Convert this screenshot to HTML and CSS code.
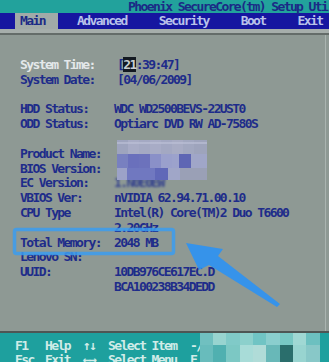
FILE: index.html
```html
<!DOCTYPE html>
<html>
<head>
<meta charset="utf-8">
<link rel="stylesheet" href="styles.css">
</head>
<body>
<div class="screen">
  <div class="title">Phoenix SecureCore(tm) Setup Uti</div>
  <nav class="tabs">
    <span class="tab active">Main</span>
    <span class="tab">Advanced</span>
    <span class="tab">Security</span>
    <span class="tab">Boot</span>
    <span class="tab">Exit</span>
  </nav>
  <div class="rule"></div>
  <main class="panel">
    <div class="row hl"><span>System Time:</span><span class="val">[<span class="cursor">21</span>:39:47]</span></div>
    <div class="row"><span>System Date:</span><span class="val">[04/06/2009]</span></div>
    <div class="row"></div>
    <div class="row"><span>HDD Status:</span><span class="val v2">WDC WD2500BEVS-22UST0</span></div>
    <div class="row"><span>ODD Status:</span><span class="val v2">Optiarc DVD RW AD-7580S</span></div>
    <div class="row"></div>
    <div class="row"><span>Product Name:</span><span class="val"></span></div>
    <div class="row"><span>BIOS Version:</span><span class="val"></span></div>
    <div class="row"><span>EC Version:</span><span class="val v2 blur">1.N0E0EW</span></div>
    <div class="row"><span>VBIOS Ver:</span><span class="val v2">nVIDIA 62.94.71.00.10</span></div>
    <div class="row"><span>CPU Type</span><span class="val v2">Intel(R) Core(TM)2 Duo T6600</span></div>
    <div class="row"><span></span><span class="val v2">2.20GHz</span></div>
    <div class="row"><span>Total Memory:</span><span class="val v2">2048 MB</span></div>
    <div class="row"><span>Lenovo SN:</span><span class="val"></span></div>
    <div class="row"><span>UUID:</span><span class="val v2">10DB976CE617EC.D</span></div>
    <div class="row"><span></span><span class="val v2">BCA100238B34DEDD</span></div>
    <div class="mosaic">
      <div class="m m1"></div>
      <div class="m m2"></div>
      <div class="m m3"></div>
    </div>
  </main>
  <div class="sep"></div>
  <footer class="keys">
    <div class="krow"><span>F1</span><span>Help</span><span>↑↓</span><span>Select Item</span><span>-/</span></div>
    <div class="krow"><span>Esc</span><span>Exit</span><span>←→</span><span>Select Menu</span><span>F</span></div>
    <div class="fmosaic">
      <div class="fm fm1"></div>
      <div class="fm fm2"></div>
    </div>
  </footer>
  <svg class="marks" width="329" height="362" viewBox="0 0 329 362">
    <rect x="14.5" y="229.5" width="159" height="24" rx="2" fill="none" stroke="#3b9cf0" stroke-width="3.5" opacity="0.85"/>
    <polygon points="186,243 223,249 218,256 280,304 277,307 209,265 199,270" fill="#3192ee" opacity="0.95"/>
  </svg>
</div>
</body>
</html>
```
FILE: styles.css
```css
body {
  margin: 0;
  background: #8e9994;
}

.screen {
  position: relative;
  width: 329px;
  height: 362px;
  overflow: hidden;
  background: #8e9994;
  font-family: "DejaVu Sans Mono", "Liberation Mono", monospace;
  font-weight: bold;
  font-size: 13px;
  letter-spacing: -1.6px;
}

.title {
  height: 13px;
  line-height: 13px;
  padding-left: 128px;
  background: #22a29c;
  color: #1b2a86;
  white-space: nowrap;
}

.tabs {
  display: flex;
  height: 16px;
  line-height: 16px;
  padding-left: 15px;
  background: #1616a0;
  color: #b9c2ea;
  white-space: nowrap;
}

.tab + .tab {
  margin-left: 32px;
}

.tab.active + .tab {
  margin-left: 19px;
}

.tab.active {
  width: 43px;
  box-sizing: border-box;
  padding-left: 5px;
  background: #a1aaa8;
  color: #1b2a86;
}

.rule {
  height: 4px;
  background: #a6aeab;
  border-bottom: 2px solid #646c69;
}

.panel {
  position: relative;
  width: 326px;
  height: 296px;
  box-sizing: border-box;
  padding: 23px 0 0 20px;
  border-right: 1px solid #aab4b0;
}

.row {
  display: grid;
  grid-template-columns: 94px auto;
  height: 14.8px;
  line-height: 14.8px;
  color: #1e2c8a;
  white-space: nowrap;
}

.row.hl > span:first-child {
  color: #e4e8ea;
}

.val {
  padding-left: 3px;
}

.val.v2 {
  padding-left: 0;
}

.cursor {
  background: #141a22;
  color: #c8ced2;
}

.blur {
  filter: blur(0.8px);
  opacity: 0.8;
}

.mosaic {
  position: absolute;
  left: 117px;
  top: 105px;
  width: 90px;
}

.m {
  height: 14px;
}

.m1 {
  background: linear-gradient(180deg, rgba(255,255,255,0) 0 2px, rgba(190,194,216,0.6) 2px 4px, rgba(255,255,255,0) 4px),
    linear-gradient(90deg, #9ea4be 0 11px, #a8acc6 11px 22px, #a4a9c3 22px 33px, #a8acc6 33px 44px, #a3a8c2 44px 55px, #a8acc4 55px 66px, #a2a8c0 66px 77px, #9ea4bc 77px 90px);
}

.m2 {
  background: linear-gradient(90deg, #7880c0 0 11px, #6a70bc 11px 22px, #6c72bc 22px 33px, #8a90c8 33px 44px, #9aa0cc 44px 55px, #9ca2cc 55px 62px, #5e66b4 62px 74px, #a0a6c8 74px 90px);
}

.m3 {
  height: 12px;
  background: linear-gradient(90deg, #9ca2c8 0 10px, #7078c0 10px 38px, #6068b8 38px 51px, #a0a6c8 51px 63px, #9aa0b6 63px 90px);
}

.sep {
  height: 2px;
  background: #4e5654;
}

.keys {
  position: relative;
  height: 29px;
  box-sizing: border-box;
  padding: 6px 0 0 15px;
  background: #1ea09e;
  color: #d0ece8;
  overflow: hidden;
}

.krow {
  display: grid;
  grid-template-columns: 30px 38px 25px 82px auto;
  height: 14px;
  line-height: 14px;
  white-space: nowrap;
}

.fmosaic {
  position: absolute;
  left: 200px;
  top: 0;
  width: 129px;
}

.fm1 {
  height: 12px;
  background: linear-gradient(90deg, #70c0c0 0 13px, #98d4d0 13px 26px, #80cac8 26px 40px, #8cd0cc 40px 53px, #70c4c4 53px 66px, #8acece 66px 80px, #78c8c4 80px 93px, #a0d8d4 93px 106px, #6cc0c0 106px 120px, #1ea09e 120px);
}

.fm2 {
  height: 17px;
  background: linear-gradient(90deg, #68bcbc 0 13px, #50b0b0 13px 26px, #7cc8c4 26px 40px, #a8dcd8 40px 53px, #b0dcd8 53px 66px, #68b8b8 66px 80px, #2a6e6c 80px 93px, #98d4d0 93px 106px, #88c8c8 106px 120px, #1ea09e 120px);
}

.marks {
  position: absolute;
  left: 0;
  top: 0;
  pointer-events: none;
}
```
